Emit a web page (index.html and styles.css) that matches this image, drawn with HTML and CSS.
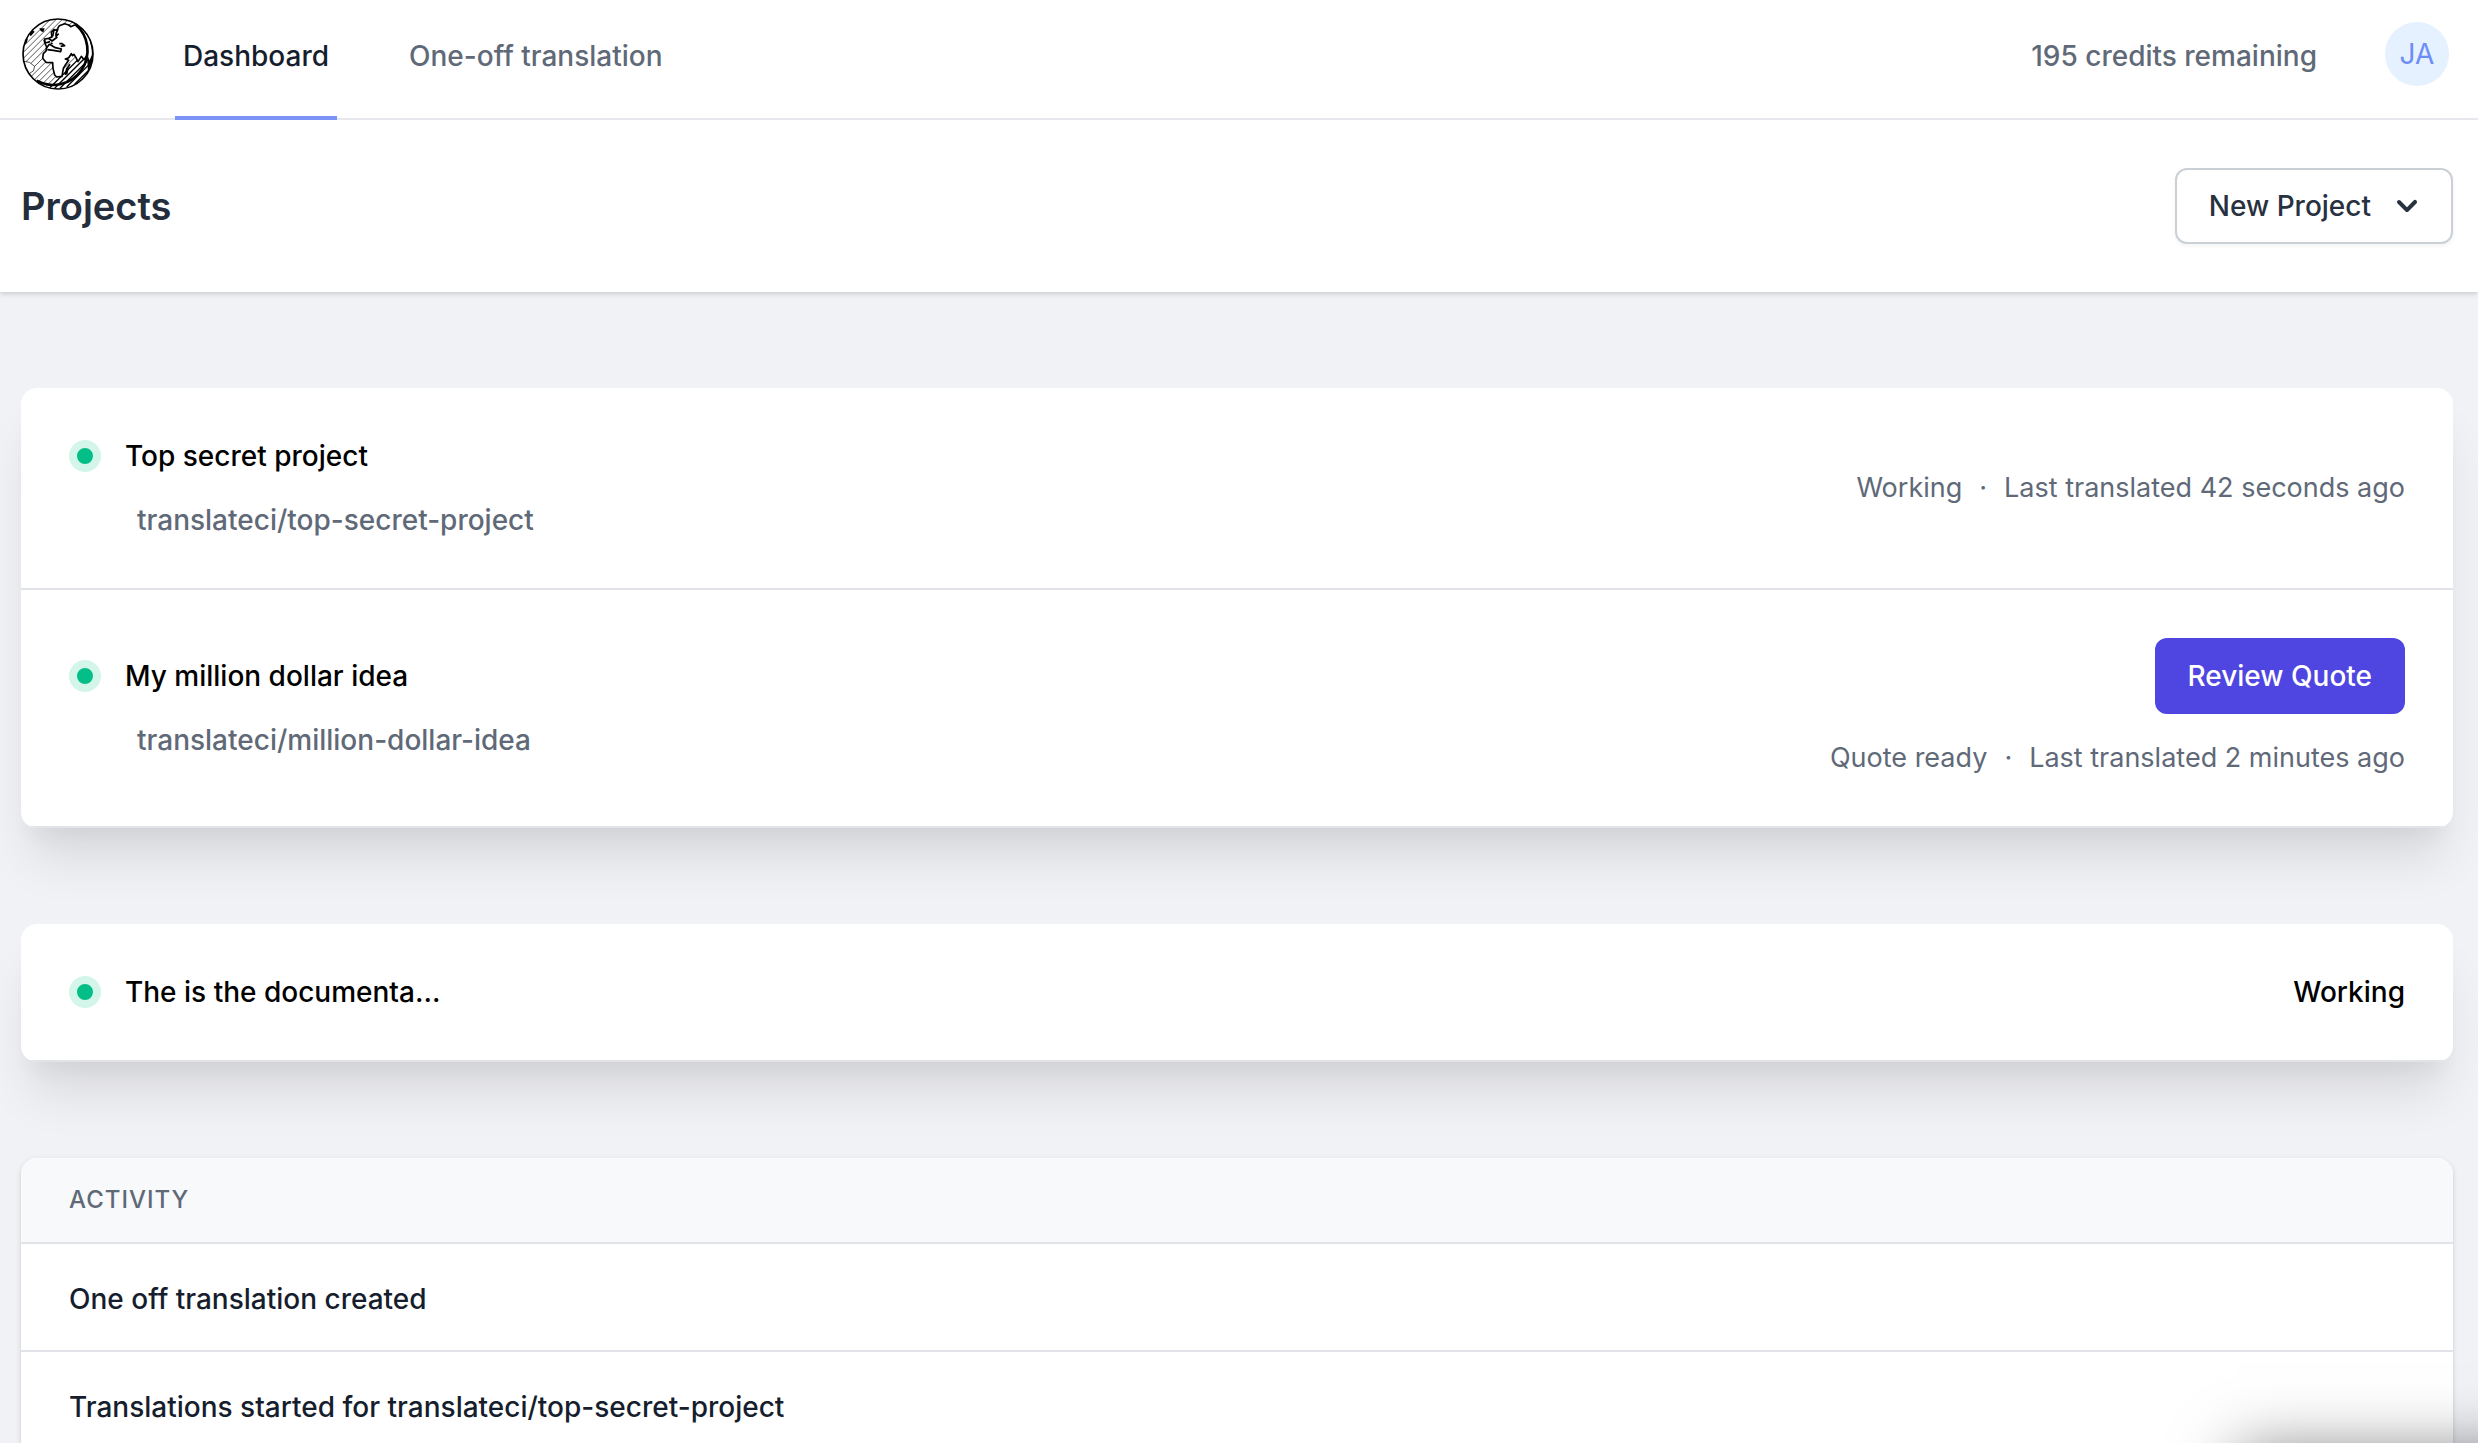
FILE: index.html
```html
<!DOCTYPE html>
<html lang="en">
<head>
<meta charset="utf-8">
<meta name="viewport" content="width=device-width, initial-scale=1">
<title>Projects</title>
<link rel="stylesheet" href="styles.css">
</head>
<body>
<header class="topbar">
  <a class="logo" href="#" aria-label="Home">
    <svg viewBox="38 29 216 216" aria-hidden="true">
      <defs>
        <clipPath id="globe"><circle cx="146" cy="137" r="105"/></clipPath>
      </defs>
      <circle cx="146" cy="137" r="105" fill="#fff"/>
      <g clip-path="url(#globe)">
        <path class="hatch" d="M38 118 124 32M38 136 142 32M40 152 160 32M42 168 178 32M52 178 198 32M58 192 218 32M66 204 238 32M76 214 250 40M86 222 250 58M96 230 260 66M110 234 260 84"/>
        <path class="hatch hatch-bold" d="M120 240 260 100M136 240 260 116M152 240 260 132M172 236 260 148M196 228 260 164"/>
        <path class="land" d="M142 66 150 52 166 46 178 50 184 55 196 50 206 51 224 64 240 86 250 112 250 140 242 160 238 156 232 142 224 154 216 144 206 160 200 148 194 138 190 142 186 136 178 148 168 152 178 156 168 170 162 180 158 204 142 206 136 200 131 180 130 163 110 162 100 150 102 136 110 128 112 116 106 104 106 92 118 90 128 86 126 72 134 64Z"/>
        <path class="land-thin" d="M38 158 60 162 76 174 72 188 62 194 56 204Z"/>
        <path class="detail" d="M118 90 128 98 136 92 144 86M134 64 130 84M146 62 140 76 140 84 148 76M112 118 120 108 128 112 138 118 156 122 154 130 132 126 114 124M150 106 158 106 166 112 154 114M104 94 108 104 122 100M124 104 130 106M168 200 172 182 182 168M172 198 176 178"/>
        <path d="M60 78 70 66 76 70 64 84ZM90 60 106 60 102 72 94 68ZM44 98 56 90 52 104 46 108Z"/>
        <path d="M234 160 252 150 236 190ZM224 64 252 110 250 134 240 92Z"/>
      </g>
      <circle class="rim" cx="146" cy="137" r="105"/>
      <path class="rim-bold" d="M198 48A103 103 0 0 1 82 217"/>
    </svg>
  </a>
  <nav class="tabs">
    <a class="tab tab-active" href="#" aria-current="page">Dashboard</a>
    <a class="tab" href="#">One-off translation</a>
  </nav>
  <span class="credits">195 credits remaining</span>
  <button class="avatar" type="button" aria-label="Account menu">JA</button>
</header>

<div class="page-head">
  <h1>Projects</h1>
  <button class="btn btn-outline" type="button">New Project
    <svg class="chevron" viewBox="0 0 20 20" aria-hidden="true"><path fill-rule="evenodd" clip-rule="evenodd" d="M5.293 7.293a1 1 0 011.414 0L10 10.586l3.293-3.293a1 1 0 111.414 1.414l-4 4a1 1 0 01-1.414 0l-4-4a1 1 0 010-1.414z"/></svg>
  </button>
</div>

<main class="content">
  <ul class="card">
    <li class="project">
      <div class="info">
        <div class="title"><span class="dot"></span><a href="#">Top secret project</a></div>
        <a class="repo" href="#">translateci/top-secret-project</a>
      </div>
      <div class="status">
        <p class="meta"><span>Working</span><span>·</span><span>Last translated 42 seconds ago</span></p>
      </div>
    </li>
    <li class="project">
      <div class="info">
        <div class="title"><span class="dot"></span><a href="#">My million dollar idea</a></div>
        <a class="repo" href="#">translateci/million-dollar-idea</a>
      </div>
      <div class="status">
        <button class="btn btn-primary" type="button">Review Quote</button>
        <p class="meta"><span>Quote ready</span><span>·</span><span>Last translated 2 minutes ago</span></p>
      </div>
    </li>
  </ul>

  <ul class="card">
    <li class="project">
      <div class="title"><span class="dot"></span><a href="#">The is the documenta...</a></div>
      <span class="state">Working</span>
    </li>
  </ul>

  <section class="activity">
    <h2>Activity</h2>
    <ul>
      <li>One off translation created</li>
      <li>Translations started for translateci/top-secret-project</li>
    </ul>
  </section>
</main>
<div class="drawer" aria-hidden="true"></div>
</body>
</html>
```
FILE: styles.css
```css
* {
  box-sizing: border-box;
}

body {
  margin: 0;
  background: #f1f2f6;
  color: #161e2e;
  font: 500 28px/40px Inter, "Liberation Sans", sans-serif;
}

h1, h2, p, ul {
  margin: 0;
  padding: 0;
}

ul {
  list-style: none;
}

a {
  color: inherit;
  text-decoration: none;
}

button {
  font: inherit;
  cursor: pointer;
}

.topbar {
  display: flex;
  align-items: center;
  height: 120px;
  padding: 0 29px 10px 22px;
  background: #fff;
  border-bottom: 2px solid #ebecf1;
}

.logo,
.logo svg {
  display: block;
  width: 72px;
  height: 72px;
}

.hatch {
  fill: none;
  stroke: #000;
  stroke-width: 2;
}

.hatch-bold {
  stroke-width: 4;
}

.land,
.land-thin {
  fill: #fff;
  stroke: #000;
  stroke-width: 5;
  stroke-linejoin: round;
}

.land-thin {
  stroke-width: 2;
}

.detail {
  fill: none;
  stroke: #000;
  stroke-width: 5;
  stroke-linejoin: round;
}

.rim {
  fill: none;
  stroke: #000;
  stroke-width: 5;
}

.rim-bold {
  fill: none;
  stroke: #000;
  stroke-width: 8;
}

.tabs {
  display: flex;
  align-self: flex-start;
  gap: 64px;
  margin-left: 81px;
}

.tab {
  height: 120px;
  padding: 36px 8px;
  color: #606977;
  border-bottom: 4px solid transparent;
}

.tab-active {
  color: #161e2e;
  border-color: #7c93f8;
}

.credits {
  margin-left: auto;
  padding-top: 4px;
  color: #606977;
}

.avatar {
  width: 64px;
  height: 64px;
  margin-left: 68px;
  padding: 0;
  border: 0;
  border-radius: 50%;
  background: #e5f1fe;
  color: #6c8df7;
  font-weight: 400;
}

.page-head {
  display: flex;
  align-items: center;
  justify-content: space-between;
  padding: 48px 25px 48px 21px;
  background: #fff;
  box-shadow: 0 2px 6px rgba(0, 0, 0, .1), 0 2px 4px rgba(0, 0, 0, .06);
}

h1 {
  font-size: 38px;
  font-weight: 600;
  line-height: 56px;
  color: #232d3b;
}

.btn {
  display: flex;
  align-items: center;
  gap: 16px;
  height: 76px;
  padding: 0 33px;
  border: 0;
  border-radius: 12px;
}

.btn-outline {
  padding: 0 24px 0 32px;
  border: 2px solid #cbd0d7;
  background: #fff;
  color: #27313f;
  box-shadow: 0 2px 4px rgba(0, 0, 0, .05);
}

.btn-primary {
  background: #4f46e1;
  color: #fff;
}

.chevron {
  width: 40px;
  height: 40px;
  fill: currentColor;
}

.content {
  display: grid;
  gap: 96px;
  padding: 96px 25px 96px 21px;
}

.card {
  overflow: hidden;
  border-radius: 16px;
  background: #fff;
  box-shadow: 0 40px 50px -10px rgba(0, 0, 0, .1), 0 20px 20px -10px rgba(0, 0, 0, .04);
}

.project {
  display: flex;
  align-items: center;
  justify-content: space-between;
  padding: 48px;
  border-bottom: 2px solid #e2e3e9;
}

.info,
.status {
  display: flex;
  flex-direction: column;
  gap: 24px;
}

.status {
  align-items: flex-end;
}

.title {
  display: flex;
  align-items: center;
  gap: 24px;
  color: #000;
}

.dot {
  width: 32px;
  height: 32px;
  border: 8px solid #d4f5e9;
  border-radius: 50%;
  background: #04be88;
}

.repo {
  padding-left: 68px;
  color: #606977;
}

.meta {
  display: flex;
  gap: 17px;
  font-size: 27px;
  font-weight: 400;
  color: #606977;
}

.state {
  color: #000;
}

.activity {
  overflow: hidden;
  border-radius: 16px;
  background: #fff;
  box-shadow: 0 2px 6px rgba(0, 0, 0, .1), 0 2px 4px rgba(0, 0, 0, .06);
}

h2 {
  padding: 24px 48px;
  border-bottom: 2px solid #e2e3e9;
  background: #f8f9fb;
  color: #606977;
  font-size: 24px;
  font-weight: 500;
  line-height: 36px;
  letter-spacing: 1px;
  text-transform: uppercase;
}

.activity li {
  padding: 35px 48px 31px;
  border-bottom: 2px solid #e2e3e9;
}

/* Closed drawer: only its shadow rises over the bottom edge of the window */
.drawer {
  position: fixed;
  top: calc(100vh + 8px);
  right: -80px;
  width: 320px;
  height: 200px;
  box-shadow: 0 0 60px rgba(0, 0, 0, .5);
}
```
